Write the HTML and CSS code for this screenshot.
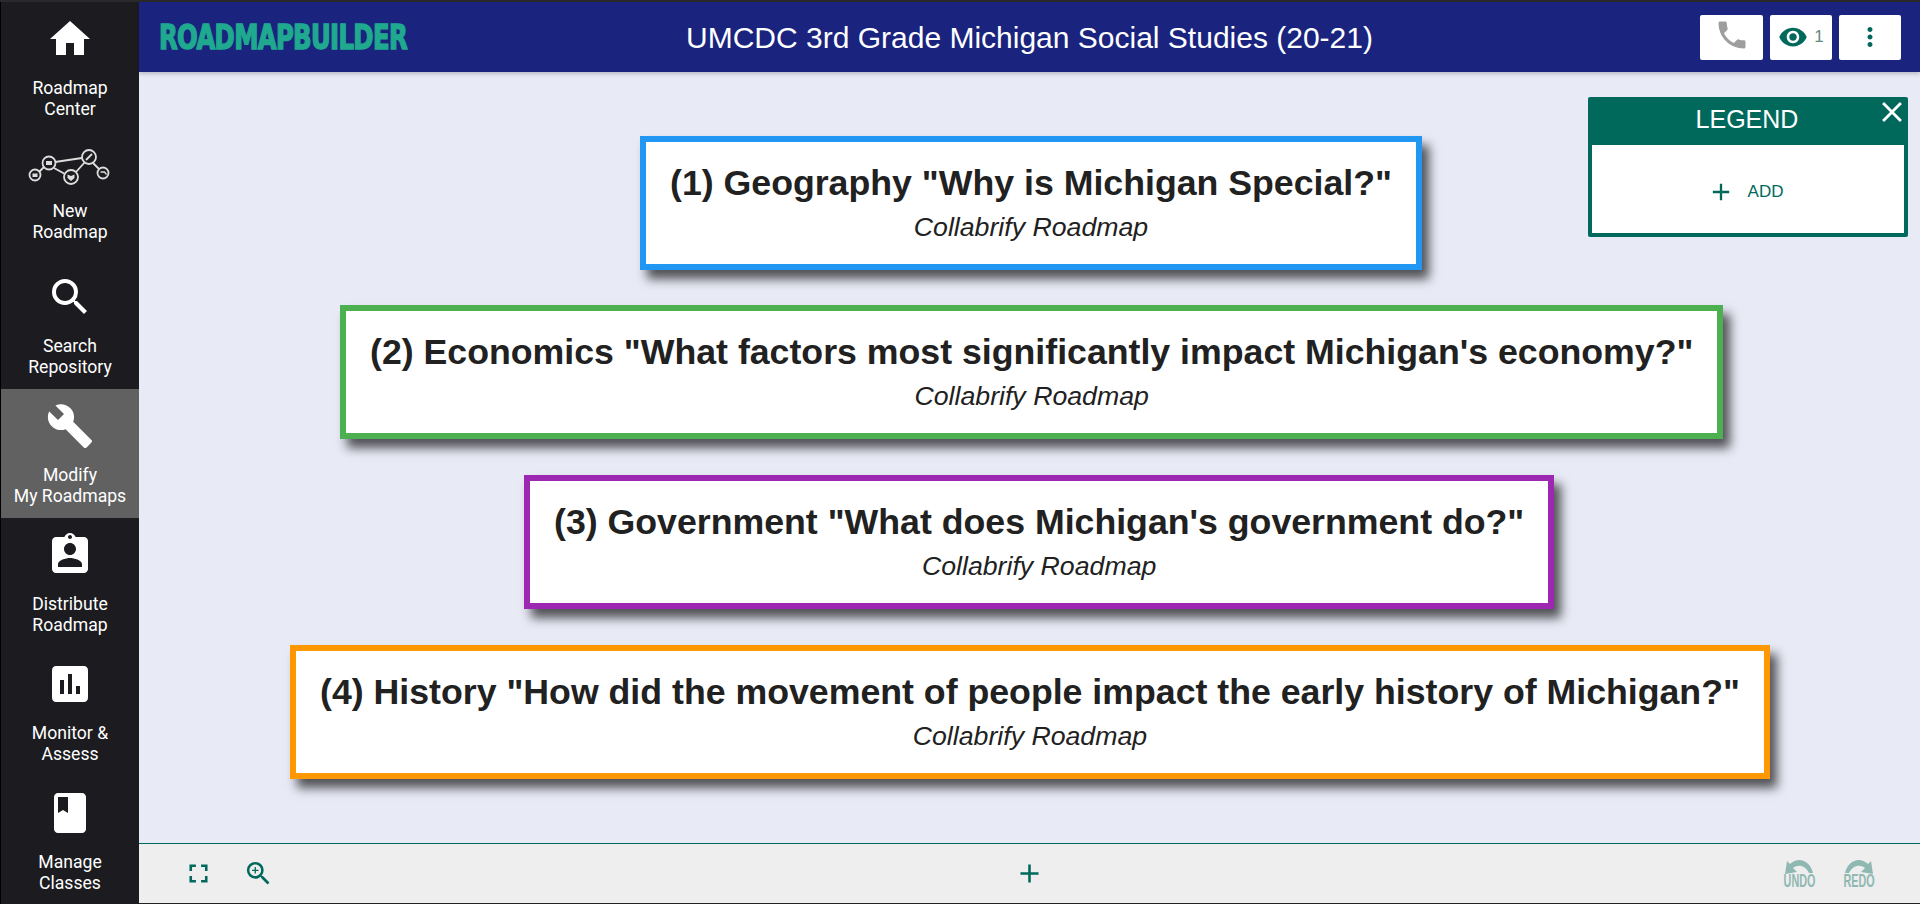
FILE: index.html
```html
<!DOCTYPE html>
<html lang="en">
  <head>
    <meta charset="UTF-8" />
    <title>RoadmapBuilder</title>
    <link rel="stylesheet" href="styles.css">
  </head>
  <body>
    <div class="app">
      <nav class="sidebar">
        <a class="nav-item">
          <svg class="nav-icon" viewBox="0 0 24 24"><path d="M10 20v-6h4v6h5v-8h3L12 3 2 12h3v8z"/></svg>
          <span>Roadmap<br>Center</span>
        </a>
        <a class="nav-item">
          <svg class="nav-icon nav-map" viewBox="0 0 84 38" fill="none" stroke="#ddd" stroke-width="1.8">
            <path d="M11 24 16 19M27 14 54 10M26 20 37 26M48 24 57 14M65 15 71 21"/>
            <circle cx="7" cy="27" r="5.5"/>
            <circle cx="21" cy="15" r="6.5"/>
            <circle cx="43" cy="29" r="7"/>
            <circle cx="61" cy="9" r="7"/>
            <circle cx="75" cy="25" r="5.5"/>
            <rect x="4.5" y="25.5" width="5" height="3.5" fill="#ddd" stroke="none"/>
            <rect x="18" y="13" width="6" height="4" fill="#ddd" stroke="none"/>
            <path d="M39.5 26.5 43 28l3.5-1.5V30L43 33l-3.500-3z" fill="#ddd" stroke="none"/>
            <path d="M58 12 64 6"/>
            <path d="M72.500 24h4l2 2.500" stroke-width="1.300"/>
          </svg>
          <span>New<br>Roadmap</span>
        </a>
        <a class="nav-item">
          <svg class="nav-icon" viewBox="0 0 24 24"><path d="M15.5 14h-.79l-.28-.27A6.47 6.47 0 0 0 16 9.5 6.5 6.5 0 1 0 9.5 16c1.61 0 3.09-.59 4.23-1.57l.27.28v.79l5 4.99L20.49 19zm-6 0C7.01 14 5 11.99 5 9.5S7.01 5 9.5 5 14 7.01 14 9.5 11.99 14 9.5 14"/></svg>
          <span>Search<br>Repository</span>
        </a>
        <a class="nav-item active">
          <svg class="nav-icon" viewBox="0 0 24 24"><path d="M22.7 19l-9.1-9.1c.9-2.3.4-5-1.5-6.9-2-2-5-2.4-7.4-1.3L9 6 6 9 1.6 4.700C.4 7.100.9 10.100 2.900 12.100c1.900 1.900 4.600 2.400 6.900 1.500l9.100 9.100c.4.4 1 .4 1.400 0l2.300-2.300c.5-.4.5-1.100.1-1.400"/></svg>
          <span>Modify<br>My Roadmaps</span>
        </a>
        <a class="nav-item">
          <svg class="nav-icon" viewBox="0 0 24 24"><path d="M19 3h-4.18C14.4 1.84 13.3 1 12 1s-2.4.84-2.82 2H5c-1.1 0-2 .9-2 2v14c0 1.1.9 2 2 2h14c1.100 0 2-.9 2-2V5c0-1.100-.9-2-2-2m-7-1c.55 0 1 .45 1 1s-.45 1-1 1-1-.45-1-1 .45-1 1-1m0 4c1.66 0 3 1.34 3 3s-1.34 3-3 3-3-1.34-3-3 1.34-3 3-3m6 12H6v-1.400c0-2 4-3.100 6-3.100s6 1.100 6 3.100z"/></svg>
          <span>Distribute<br>Roadmap</span>
        </a>
        <a class="nav-item">
          <svg class="nav-icon" viewBox="0 0 24 24"><path d="M19 3H5c-1.100 0-2 .9-2 2v14c0 1.100.9 2 2 2h14c1.100 0 2-.9 2-2V5c0-1.100-.9-2-2-2M9 17H7v-7h2zm4 0h-2V7h2zm4 0h-2v-4h2z"/></svg>
          <span>Monitor &amp;<br>Assess</span>
        </a>
        <a class="nav-item">
          <svg class="nav-icon" viewBox="0 0 24 24"><path d="M18 2H6c-1.100 0-2 .9-2 2v16c0 1.100.9 2 2 2h12c1.100 0 2-.9 2-2V4c0-1.100-.9-2-2-2M6 4h5v8l-2.500-1.500L6 12z"/></svg>
          <span>Manage<br>Classes</span>
        </a>
      </nav>

      <div class="workspace">
        <header class="topbar">
          <div class="logo">ROADMAPBUILDER</div>
          <h1 class="title">UMCDC 3rd Grade Michigan Social Studies (20-21)</h1>
          <div class="top-actions">
            <button class="top-btn phone-btn">
              <svg class="phone-icon" viewBox="0 0 24 24"><path d="M6.620 10.790c1.440 2.830 3.760 5.140 6.590 6.590l2.200-2.200c.27-.27.67-.36 1.020-.24 1.120.37 2.330.57 3.570.57.55 0 1 .45 1 1V20c0 .55-.45 1-1 1C10.610 21 3 13.390 3 4c0-.55.45-1 1-1h3.500c.55 0 1 .45 1 1 0 1.250.2 2.450.57 3.570.11.35.03.74-.25 1.020z"/></svg>
            </button>
            <button class="top-btn">
              <svg class="eye-icon" viewBox="0 0 24 24"><path d="M12 4.500C7 4.500 2.730 7.610 1 12c1.730 4.390 6 7.500 11 7.500s9.270-3.110 11-7.500c-1.730-4.390-6-7.500-11-7.500M12 17c-2.760 0-5-2.240-5-5s2.240-5 5-5 5 2.240 5 5-2.240 5-5 5m0-8c-1.660 0-3 1.340-3 3s1.340 3 3 3 3-1.340 3-3-1.340-3-3-3"/></svg>
              <span class="viewers">1</span>
            </button>
            <button class="top-btn">
              <svg class="eye-icon" viewBox="0 0 24 24"><path d="M12 8c1.100 0 2-.9 2-2s-.9-2-2-2-2 .9-2 2 .9 2 2 2m0 2c-1.100 0-2 .9-2 2s.9 2 2 2 2-.9 2-2-.9-2-2-2m0 6c-1.100 0-2 .9-2 2s.9 2 2 2 2-.9 2-2-.9-2-2-2"/></svg>
            </button>
          </div>
        </header>

        <main class="canvas">
          <div class="node node-1">
            <div class="node-title">(1) Geography "Why is Michigan Special?"</div>
            <div class="node-sub">Collabrify Roadmap</div>
          </div>
          <div class="node node-2">
            <div class="node-title">(2) Economics "What factors most significantly impact Michigan's economy?"</div>
            <div class="node-sub">Collabrify Roadmap</div>
          </div>
          <div class="node node-3">
            <div class="node-title">(3) Government "What does Michigan's government do?"</div>
            <div class="node-sub">Collabrify Roadmap</div>
          </div>
          <div class="node node-4">
            <div class="node-title">(4) History "How did the movement of people impact the early history of Michigan?"</div>
            <div class="node-sub">Collabrify Roadmap</div>
          </div>

          <aside class="legend">
            <div class="legend-head">
              LEGEND
              <svg class="legend-close" viewBox="0 0 24 24"><path d="M19 6.410 17.590 5 12 10.590 6.410 5 5 6.410 10.590 12 5 17.590 6.410 19 12 13.410 17.590 19 19 17.590 13.410 12z"/></svg>
            </div>
            <div class="legend-body">
              <svg class="legend-plus" viewBox="0 0 24 24"><path d="M19 13h-6v6h-2v-6H5v-2h6V5h2v6h6z"/></svg>
              <span>ADD</span>
            </div>
          </aside>
        </main>

        <footer class="bottombar">
          <div class="bottom-left">
            <svg class="tool-icon" viewBox="0 0 24 24"><path d="M7 14H5v5h5v-2H7zm-2-4h2V7h3V5H5zm12 7h-3v2h5v-5h-2zM14 5v2h3v3h2V5z"/></svg>
            <svg class="tool-icon" viewBox="0 0 24 24"><path d="M15.500 14h-.79l-.28-.27A6.470 6.470 0 0 0 16 9.500 6.500 6.500 0 1 0 9.500 16c1.610 0 3.090-.59 4.230-1.570l.27.28v.79l5 4.990L20.490 19zm-6 0C7.010 14 5 11.990 5 9.500S7.010 5 9.500 5 14 7.010 14 9.500 11.990 14 9.500 14"/><path d="M12 10h-2v2H9v-2H7V9h2V7h1v2h2z"/></svg>
          </div>
          <svg class="tool-icon bottom-add" viewBox="0 0 24 24"><path d="M19 13h-6v6h-2v-6H5v-2h6V5h2v6h6z"/></svg>
          <div class="bottom-right">
            <div class="history">
              <svg viewBox="0 0 30 15"><path d="M3 2 1 15l12-2-4-4c5-4 12-3 16 5h4C26 2 15-3 6 5z"/></svg>
              <span>UNDO</span>
            </div>
            <div class="history">
              <svg viewBox="0 0 30 15"><path d="M27 2l2 13-12-2 4-4c-5-4-12-3-16 5H1C4 2 15-3 24 5z"/></svg>
              <span>REDO</span>
            </div>
          </div>
        </footer>
      </div>
    </div>
  </body>
</html>
```

FILE: styles.css
```css
* {
  box-sizing: border-box;
  margin: 0;
  padding: 0;
}

body {
  height: 904px;
  overflow: hidden;
  font-family: "Liberation Sans", Arial, sans-serif;
  background-color: #1c1c20;
}

.app {
  display: flex;
  height: 904px;
  padding-top: 2px;
  background-color: #2a2a2c;
}

/* left nav */
.sidebar {
  width: 139px;
  flex-shrink: 0;
  overflow: hidden;
  background-color: #1c1c20;
  border-left: 1px solid #000;
  font-family: Roboto, sans-serif;
}

.nav-item {
  display: flex;
  flex-direction: column;
  align-items: center;
  height: 129px;
  padding-top: 13px;
  color: #fff;
  font-size: 17.6px;
  line-height: 21px;
  text-align: center;
}

.nav-item.active {
  background-color: #616161;
}

.nav-icon {
  width: 48px;
  height: 48px;
  margin-bottom: 15px;
  fill: #fff;
}

.nav-map {
  width: 84px;
  height: 38px;
  margin-top: 4px;
  margin-bottom: 15px;
  fill: none;
}

/* main area */
.workspace {
  flex: 1;
  display: flex;
  flex-direction: column;
  min-width: 0;
}

.topbar {
  position: relative;
  display: flex;
  align-items: center;
  justify-content: space-between;
  height: 70px;
  padding: 0 20px;
  background-color: #1a237e;
  box-shadow: 0 2px 4px rgb(0 0 0 / 20%);
  z-index: 2;
}

.logo {
  font-family: "DejaVu Sans Condensed", "DejaVu Sans", sans-serif;
  font-weight: 700;
  font-size: 33px;
  letter-spacing: -0.8px;
  color: #1fa98f;
  -webkit-text-stroke: 1.4px #1fa98f;
  transform: scaleX(0.82);
  transform-origin: left center;
}

.title {
  position: absolute;
  left: 0;
  right: 0;
  margin-top: 2px;
  text-align: center;
  font-size: 30px;
  font-weight: 400;
  color: #fff;
  pointer-events: none;
}

.top-actions {
  display: flex;
  gap: 7px;
  margin-right: -1px;
}

.top-btn {
  display: flex;
  align-items: center;
  justify-content: center;
  gap: 6px;
  width: 62px;
  height: 45px;
  border: 0;
  border-radius: 2px;
  background-color: #fff;
  color: #00695c;
  fill: #00695c;
}

.phone-btn {
  width: 63px;
}

.phone-icon {
  width: 36px;
  height: 36px;
  fill: #9e9e9e;
  margin-top: -4px;
}

.eye-icon {
  width: 30px;
  height: 30px;
}

.viewers {
  font-size: 17px;
  color: #5f8a84;
}

.canvas {
  position: relative;
  flex: 1;
  background-color: #e8eaf6;
}

/* roadmap nodes sit at their own spot on the canvas */
.node {
  position: absolute;
  height: 134px;
  padding: 20px 24px 0;
  border: 6px solid;
  background-color: #fff;
  text-align: center;
  white-space: nowrap;
  box-shadow: 7px 9px 10px rgb(0 0 0 / 65%);
}

.node-1 { left: 501px; top: 64px; border-color: #2196f3; }
.node-2 { left: 201px; top: 233px; border-color: #4caf50; }
.node-3 { left: 385px; top: 403px; border-color: #9c27b0; }
.node-4 { left: 151px; top: 573px; border-color: #ff9800; }

.node-title {
  font-size: 35.7px;
  line-height: 42px;
  font-weight: 700;
  color: #212121;
}

.node-sub {
  margin-top: 7px;
  font-size: 26.7px;
  line-height: 32px;
  font-style: italic;
  color: #212121;
}

.legend {
  position: absolute;
  top: 25px;
  left: 1449px;
  width: 320px;
  height: 140px;
  border: 4px solid #00695c;
  border-radius: 2px;
  background-color: #fff;
}

.legend-head {
  position: relative;
  height: 44px;
  line-height: 36px;
  padding-right: 2px;
  background-color: #00695c;
  color: #fff;
  text-align: center;
  font-size: 25px;
}

.legend-close {
  position: absolute;
  top: -6px;
  right: -5px;
  width: 34px;
  height: 34px;
  fill: #fff;
}

.legend-body {
  display: flex;
  align-items: center;
  justify-content: center;
  gap: 13px;
  height: 88px;
  padding-top: 6px;
  padding-right: 6px;
  color: #00695c;
  font-size: 17px;
  fill: #00695c;
}

.legend-plus {
  width: 28px;
  height: 28px;
}

.bottombar {
  position: relative;
  display: flex;
  align-items: center;
  justify-content: space-between;
  height: 61px;
  padding: 0 46px 0 44px;
  background-color: #eeeeee;
  border-top: 1px solid #00695c;
  border-bottom: 1px solid #222;
}

.bottom-left {
  display: flex;
  gap: 29px;
}

.tool-icon {
  width: 31px;
  height: 31px;
  fill: #00695c;
}

.bottom-add {
  position: absolute;
  left: 875px;
}

.bottom-right {
  display: flex;
  gap: 30px;
}

.history {
  display: flex;
  flex-direction: column;
  align-items: center;
  width: 30px;
  color: #8fb8b2;
  fill: #8fb8b2;
  font-size: 18px;
  line-height: 14px;
  font-weight: 700;
  font-family: "Liberation Sans", sans-serif;
}

.history svg {
  width: 30px;
  height: 15px;
}

.history span {
  transform: scaleX(0.6);
}
```
